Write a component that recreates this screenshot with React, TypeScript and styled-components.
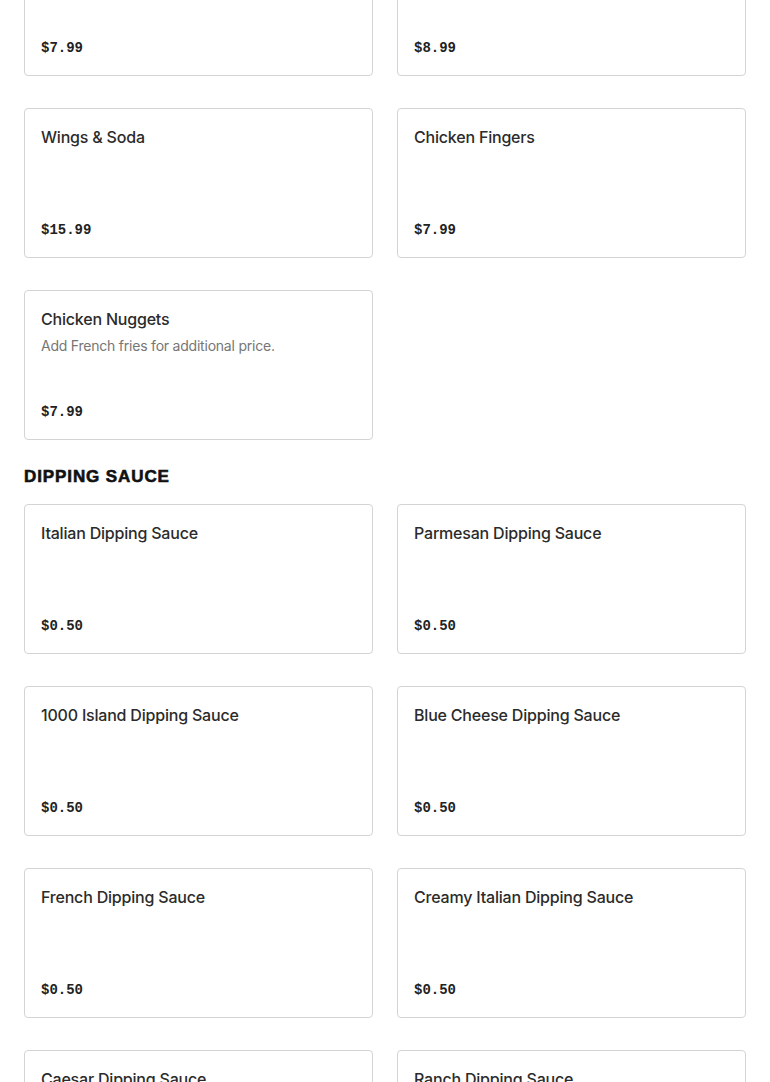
import React from "react";
import styled, { createGlobalStyle } from "styled-components";

const Global = createGlobalStyle`
  html, body { margin: 0; padding: 0; background: #ffffff; }
  body { font-family: Inter, "Noto Sans", "Liberation Sans", sans-serif; color: #2b2b2b; }
  * { box-sizing: border-box; }
`;

const Page = styled.main`
  padding: 0 24px 40px;
  margin-top: -74px;
  display: flex;
  flex-direction: column;
`;

const Section = styled.section`
  display: flex;
  flex-direction: column;
`;

const SectionTitle = styled.h2`
  margin: 25px 0 15px;
  font-family: "Liberation Sans", Arial, sans-serif;
  font-weight: 700;
  font-size: 17px;
  line-height: 24px;
  letter-spacing: 0.9px;
  -webkit-text-stroke: 0.6px #111;
  color: #111;
  text-transform: uppercase;
`;

const Grid = styled.div`
  display: grid;
  grid-template-columns: 1fr 1fr;
  column-gap: 24px;
  row-gap: 32px;
`;

const Card = styled.article`
  height: 150px;
  border: 1px solid #d4d4d4;
  border-radius: 4px;
  padding: 16px;
  display: flex;
  flex-direction: column;
  background: #fff;
`;

const Name = styled.h3`
  margin: 0;
  font-size: 16px;
  line-height: 24px;
  font-weight: 500;
  letter-spacing: -0.2px;
  color: #2b2b2b;
`;

const Desc = styled.p`
  margin: 5px 0 0;
  font-size: 14px;
  line-height: 20px;
  letter-spacing: -0.22px;
  color: #767676;
`;

const Price = styled.span`
  margin-top: auto;
  font-family: "Liberation Mono", "DejaVu Sans Mono", monospace;
  font-weight: 700;
  font-size: 14px;
  line-height: 22px;
  color: #222;
`;

type Item = { name: string; price: string; desc?: string };

const combos: Item[] = [
  { name: "Wings", price: "$7.99" },
  { name: "Boneless Wings", price: "$8.99" },
  { name: "Wings & Soda", price: "$15.99" },
  { name: "Chicken Fingers", price: "$7.99" },
  { name: "Chicken Nuggets", price: "$7.99", desc: "Add French fries for additional price." },
];

const sauces: Item[] = [
  { name: "Italian Dipping Sauce", price: "$0.50" },
  { name: "Parmesan Dipping Sauce", price: "$0.50" },
  { name: "1000 Island Dipping Sauce", price: "$0.50" },
  { name: "Blue Cheese Dipping Sauce", price: "$0.50" },
  { name: "French Dipping Sauce", price: "$0.50" },
  { name: "Creamy Italian Dipping Sauce", price: "$0.50" },
  { name: "Caesar Dipping Sauce", price: "$0.50" },
  { name: "Ranch Dipping Sauce", price: "$0.50" },
];

const MenuCard = ({ item }: { item: Item }) => (
  <Card>
    <Name>{item.name}</Name>
    {item.desc && <Desc>{item.desc}</Desc>}
    <Price>{item.price}</Price>
  </Card>
);

export default function App() {
  return (
    <>
      <Global />
      <Page>
        <Section>
          <Grid>
            {combos.map((it) => (
              <MenuCard key={it.name} item={it} />
            ))}
          </Grid>
        </Section>
        <Section>
          <SectionTitle>Dipping Sauce</SectionTitle>
          <Grid>
            {sauces.map((it) => (
              <MenuCard key={it.name} item={it} />
            ))}
          </Grid>
        </Section>
      </Page>
    </>
  );
}
